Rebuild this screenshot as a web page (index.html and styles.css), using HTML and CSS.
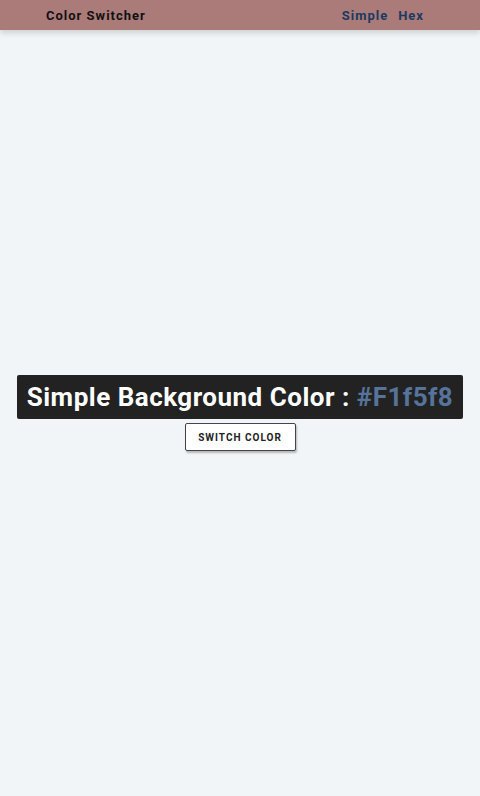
FILE: index.html
```html
<!DOCTYPE html>
<html>
<head>
<meta charset="utf-8">
<link rel="stylesheet" href="styles.css">
</head>
<body>
<nav class="navbar">
  <div class="brand">Color Switcher</div>
  <div class="links">
    <a class="link" href="#">Simple</a>
    <a class="link" href="#">Hex</a>
  </div>
</nav>
<main class="main">
  <h2 class="heading">Simple Background Color : <span class="hex">#F1f5f8</span></h2>
  <button class="btn">Switch Color</button>
</main>
</body>
</html>
```
FILE: styles.css
```css
* { box-sizing: border-box; }
html, body { margin: 0; padding: 0; height: 100%; }
body {
  background: #f1f5f8;
  font-family: Roboto, "Liberation Sans", sans-serif;
  display: flex;
  flex-direction: column;
}
.navbar {
  height: 30px;
  background: #ab7b7a;
  display: flex;
  align-items: center;
  justify-content: space-between;
  padding: 0 56px 0 46px;
  box-shadow: 0 3px 6px rgba(0,0,0,0.15);
  flex: none;
  position: relative;
  z-index: 1;
}
.brand {
  font-size: 13px;
  font-weight: 700;
  letter-spacing: 1px;
  color: #111;
}
.links { display: flex; gap: 10px; }
.link {
  font-size: 13px;
  font-weight: 700;
  letter-spacing: 1px;
  color: #1c3a5e;
  text-decoration: none;
}
.main {
  flex: 1;
  display: flex;
  flex-direction: column;
  align-items: center;
  justify-content: center;
}
.heading {
  margin: 0;
  background: #222;
  color: #fff;
  font-size: 26px;
  font-weight: 700;
  line-height: 44px;
  padding: 0 10px;
  border-radius: 2px;
  letter-spacing: 0.5px;
}
.hex { color: #56739a; }
.btn {
  margin-top: 4px;
  width: 111px;
  height: 28px;
  background: #fff;
  border: 1px solid #444;
  border-radius: 2px;
  box-shadow: 1px 2px 2px rgba(0,0,0,0.25);
  font-family: Roboto, "Liberation Sans", sans-serif;
  font-size: 10px;
  font-weight: 700;
  letter-spacing: 1px;
  text-transform: uppercase;
  color: #222;
  padding: 0;
}
```
